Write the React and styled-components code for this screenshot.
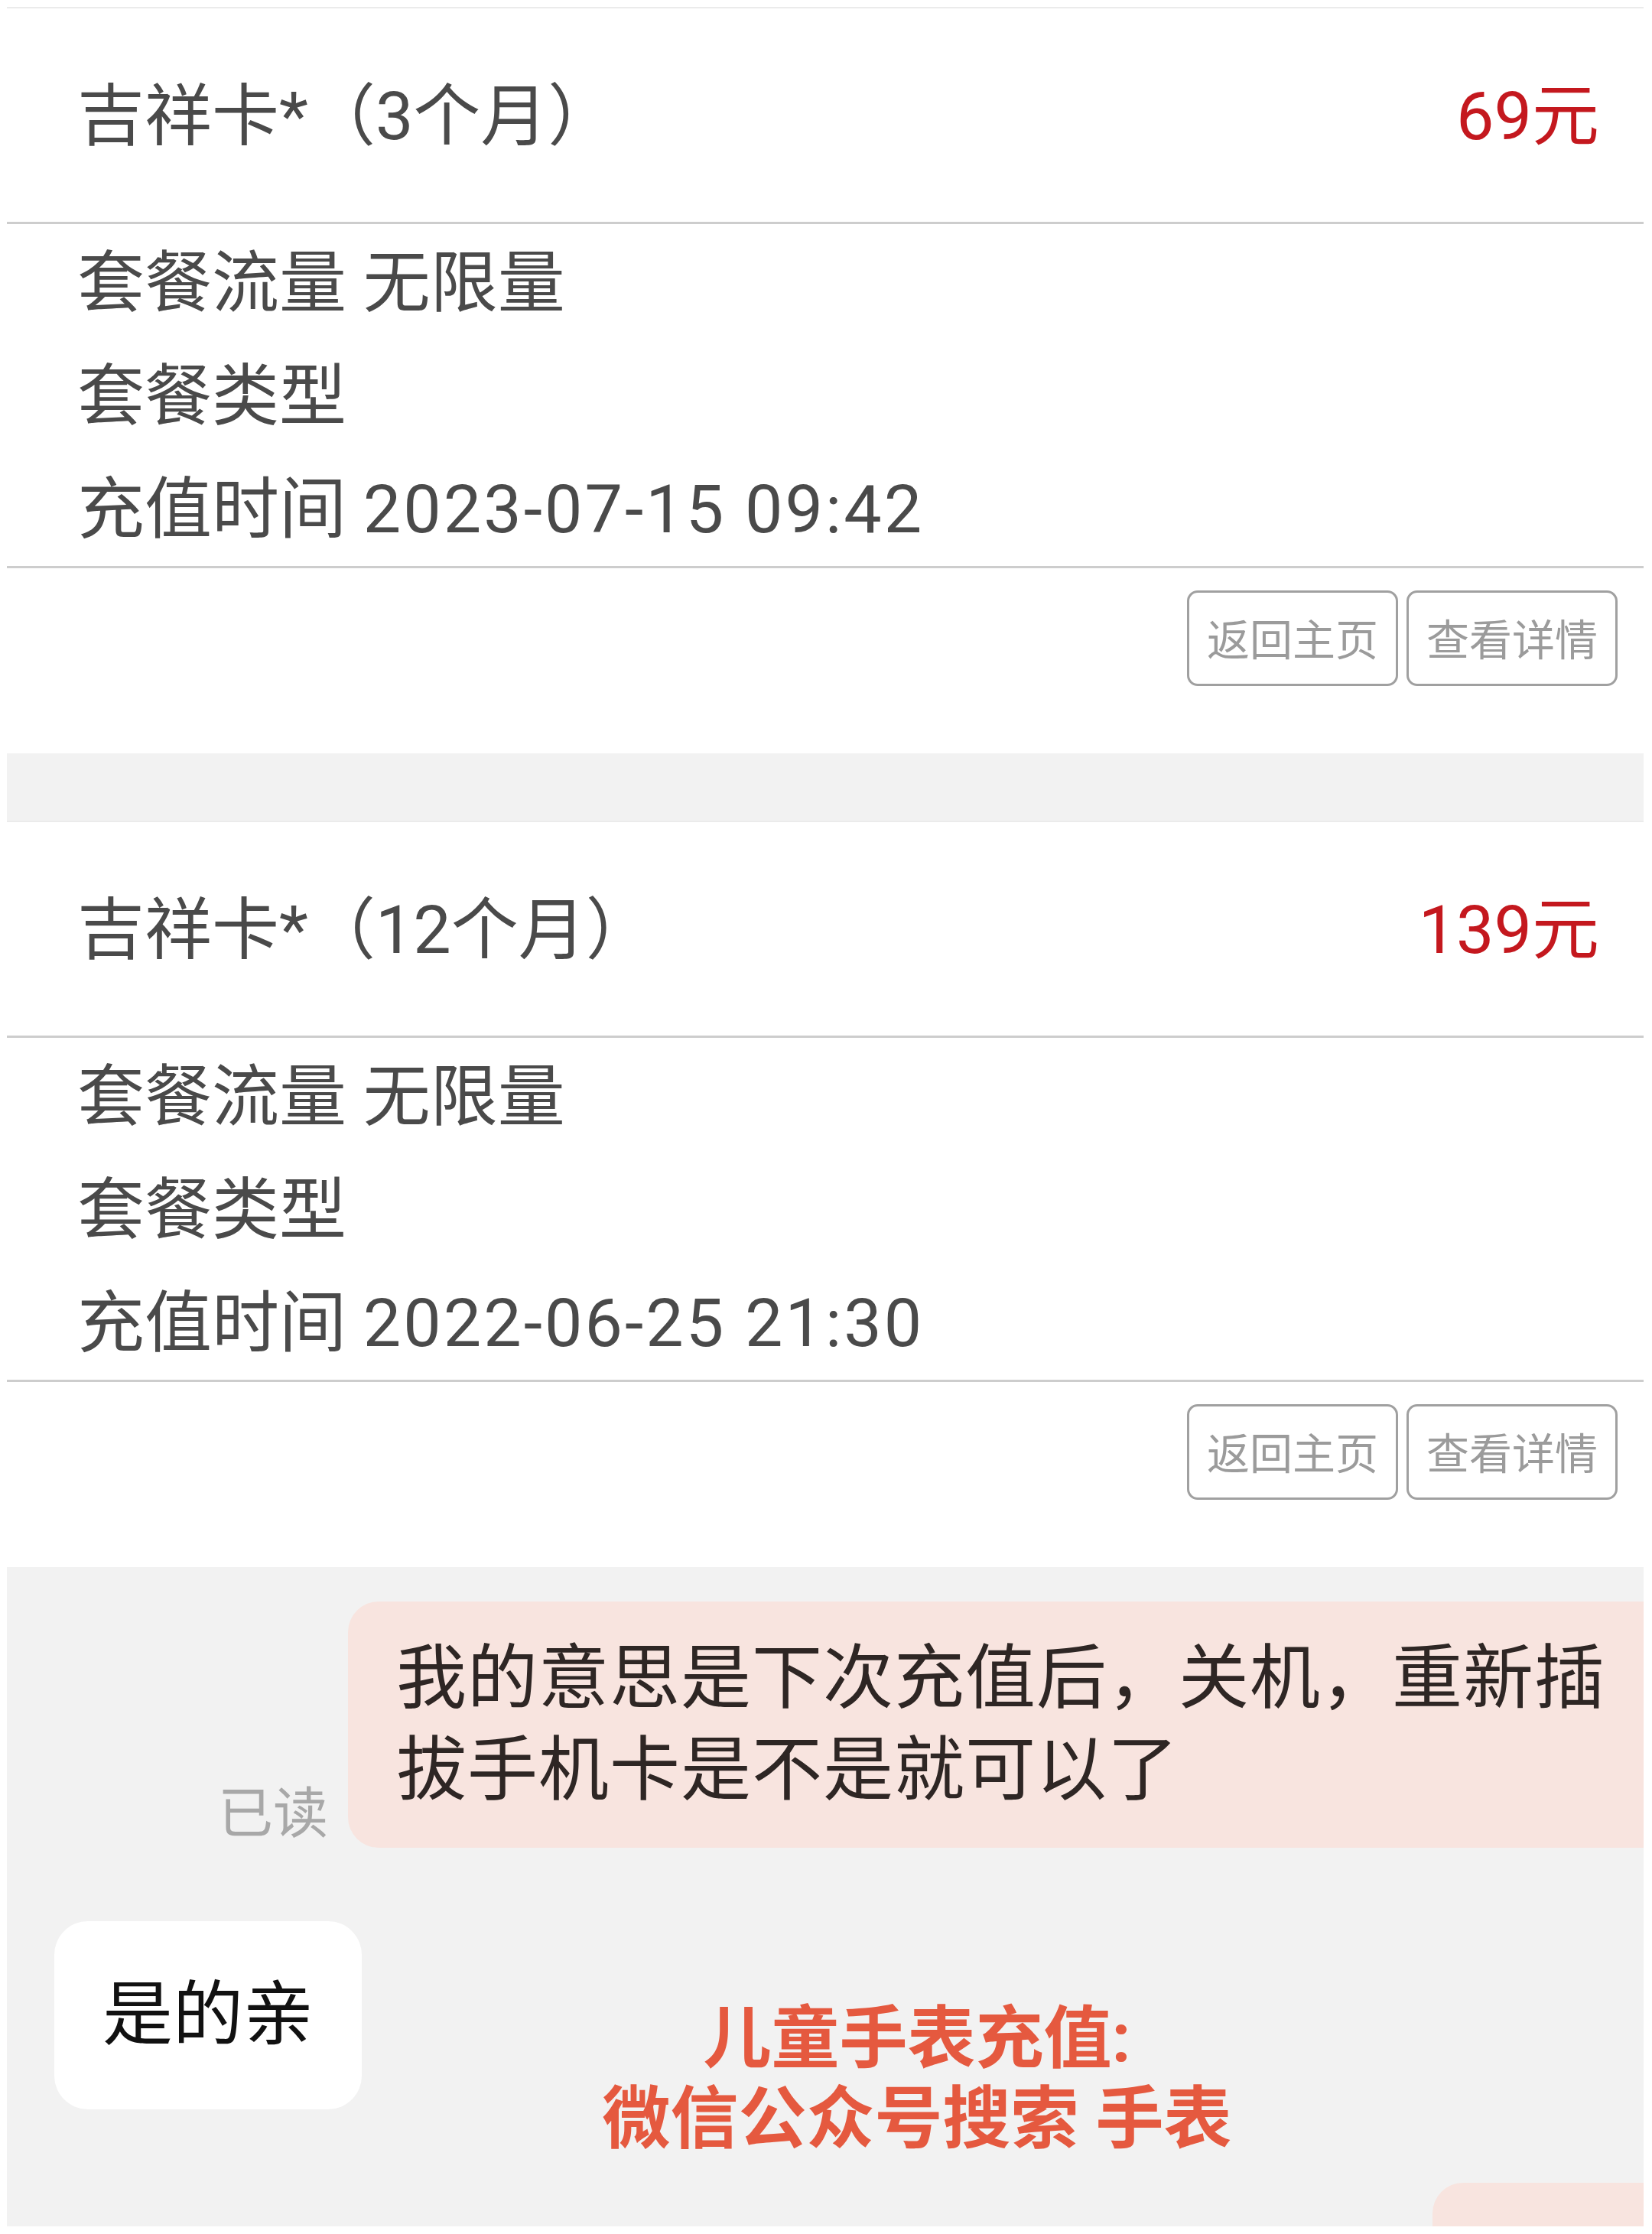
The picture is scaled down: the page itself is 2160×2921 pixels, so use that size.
import React from 'react';
import styled, { createGlobalStyle } from 'styled-components';

const orders = [
  { name: '吉祥卡*（3个月）', price: '69元', flow: '无限量', time: '2023-07-15 09:42' },
  { name: '吉祥卡*（12个月）', price: '139元', flow: '无限量', time: '2022-06-25 21:30' },
];

export default function App() {
  return (
    <>
      <GlobalStyle />
      <Page>
        <OrderList>
          {orders.map((order) => (
            <OrderCard key={order.time}>
              <TitleRow>
                <span>{order.name}</span>
                <Price>{order.price}</Price>
              </TitleRow>
              <InfoList>
                <li>套餐流量 {order.flow}</li>
                <li>套餐类型</li>
                <li>
                  充值时间 <TimeText>{order.time}</TimeText>
                </li>
              </InfoList>
              <ActionBar>
                <OutlineButton type='button'>返回主页</OutlineButton>
                <OutlineButton type='button'>查看详情</OutlineButton>
              </ActionBar>
            </OrderCard>
          ))}
        </OrderList>

        <ChatArea>
          <MessageRow $mine>
            <ReadMark>已读</ReadMark>
            <Bubble $mine>我的意思是下次充值后，关机，重新插拔手机卡是不是就可以了</Bubble>
          </MessageRow>
          <MessageRow>
            <Bubble>是的亲</Bubble>
          </MessageRow>
          <MessageRow $mine>
            <PartialBubble />
          </MessageRow>
          <Watermark>
            儿童手表充值:
            <br />
            微信公众号搜索 手表
          </Watermark>
        </ChatArea>
      </Page>
    </>
  );
}

const GlobalStyle = createGlobalStyle`
  * {
    box-sizing: border-box;
  }
  body {
    margin: 0;
    background: #fff;
    font-family: Roboto, 'Noto Sans CJK SC', 'Noto Sans', sans-serif;
  }
`;

const Page = styled.div`
  width: 2160px;
  padding: 9px 11px 11px 9px;
`;

const OrderList = styled.div`
  display: flex;
  flex-direction: column;
  gap: 88px;
  background: #f2f2f2;
`;

const OrderCard = styled.section`
  background: #fff;
  border-top: 2px solid #ebebeb;
  color: #4a4a4a;
  font-size: 88px;
`;

const TitleRow = styled.div`
  height: 282px;
  display: flex;
  align-items: center;
  justify-content: space-between;
  padding: 0 58px 14px 92px;
  border-bottom: 3px solid #cdcdcd;
`;

const Price = styled.span`
  color: #c4181e;
`;

const InfoList = styled.ul`
  list-style: none;
  margin: 0;
  padding: 3px 92px 0;
  border-bottom: 3px solid #cdcdcd;

  li {
    height: 148px;
    line-height: 148px;
    white-space: nowrap;
  }
`;

const TimeText = styled.span`
  letter-spacing: 3px;
`;

const ActionBar = styled.div`
  height: 242px;
  display: flex;
  justify-content: flex-end;
  align-items: flex-start;
  gap: 11px;
  padding: 29px 34px 0 0;
`;

const OutlineButton = styled.button`
  width: 276px;
  height: 125px;
  padding: 0 0 4px;
  background: #fff;
  border: 3px solid #a0a0a0;
  border-radius: 14px;
  color: #9b9b9b;
  font-family: inherit;
  font-size: 56px;
`;

const ChatArea = styled.div`
  position: relative;
  height: 862px;
  overflow: hidden;
  background: #f2f2f2;
  padding-top: 45px;
  display: flex;
  flex-direction: column;
  gap: 96px;
`;

const MessageRow = styled.div`
  display: flex;
  justify-content: ${(p) => (p.$mine ? 'flex-end' : 'flex-start')};
  align-items: flex-end;
  gap: 26px;
  padding-left: ${(p) => (p.$mine ? '0' : '62px')};
`;

const ReadMark = styled.span`
  color: #a8a8a8;
  font-size: 72px;
  line-height: 1;
  margin-bottom: 8px;
`;

const Bubble = styled.div`
  font-size: 92px;
  line-height: 120px;
  letter-spacing: ${(p) => (p.$mine ? '1px' : '0')};
  padding: ${(p) => (p.$mine ? '41px 30px 41px 63px' : '63px')};
  width: ${(p) => (p.$mine ? '1694px' : 'auto')};
  background: ${(p) => (p.$mine ? '#f8e4df' : '#fff')};
  color: ${(p) => (p.$mine ? '#2e2624' : '#111')};
  border-radius: ${(p) => (p.$mine ? '40px 0 0 40px' : '44px')};
`;

const PartialBubble = styled.div`
  width: 276px;
  height: 160px;
  background: #f8e4df;
  border-radius: 40px 0 0 0;
`;

const Watermark = styled.p`
  position: absolute;
  top: 564px;
  left: 1190px;
  transform: translateX(-50%);
  margin: 0;
  white-space: nowrap;
  text-align: center;
  color: #e5593f;
  font-size: 89px;
  font-weight: 700;
  line-height: 105px;
`;
